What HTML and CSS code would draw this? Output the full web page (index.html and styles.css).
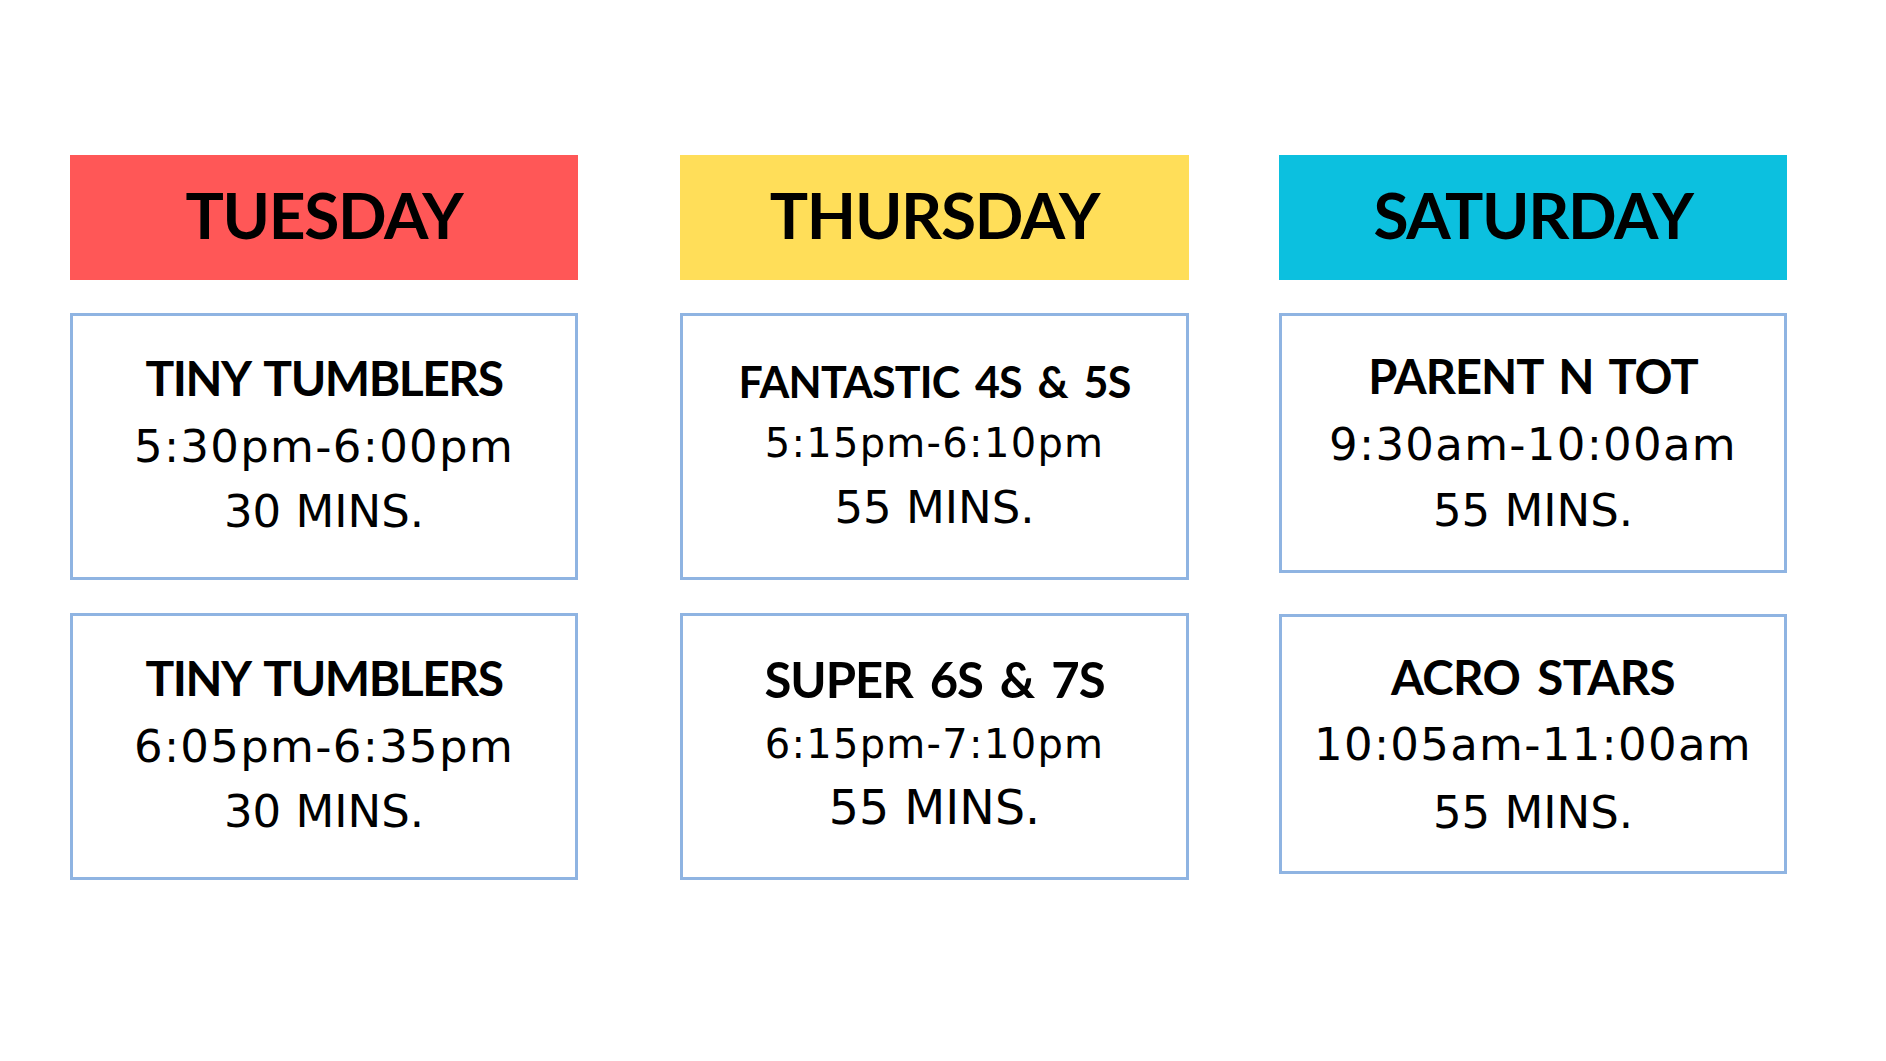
FILE: index.html
```html
<!DOCTYPE html>
<html lang="en">
<head>
<meta charset="utf-8">
<title>Class Schedule</title>
<link rel="stylesheet" href="styles.css">
</head>
<body>
<main class="schedule">
  <section class="col col-tue">
    <div class="day day-red">TUESDAY</div>
    <div class="box box-tue">
      <div class="title t-tiny">TINY TUMBLERS</div>
      <div class="time s-45">5:30pm-6:00pm</div>
      <div class="mins s-45">30 MINS.</div>
    </div>
    <div class="box box-tue">
      <div class="title t-tiny">TINY TUMBLERS</div>
      <div class="time s-45">6:05pm-6:35pm</div>
      <div class="mins s-45">30 MINS.</div>
    </div>
  </section>
  <section class="col col-thu">
    <div class="day day-yellow">THURSDAY</div>
    <div class="box box-thu1">
      <div class="title t-fantastic">FANTASTIC 4S &amp; 5S</div>
      <div class="time s-40">5:15pm-6:10pm</div>
      <div class="mins s-45">55 MINS.</div>
    </div>
    <div class="box box-thu2">
      <div class="title t-super">SUPER 6S &amp; 7S</div>
      <div class="time s-40">6:15pm-7:10pm</div>
      <div class="mins s-475">55 MINS.</div>
    </div>
  </section>
  <section class="col col-sat">
    <div class="day day-cyan">SATURDAY</div>
    <div class="box box-short box-sat1">
      <div class="title t-parent">PARENT N TOT</div>
      <div class="time s-45">9:30am-10:00am</div>
      <div class="mins s-45">55 MINS.</div>
    </div>
    <div class="box box-short box-lower box-sat2">
      <div class="title t-acro">ACRO STARS</div>
      <div class="time s-45">10:05am-11:00am</div>
      <div class="mins s-45">55 MINS.</div>
    </div>
  </section>
</main>
</body>
</html>
```

FILE: styles.css
```css
html, body {
  margin: 0;
  padding: 0;
  background: #ffffff;
}

body {
  width: 1886px;
  height: 1061px;
  overflow: hidden;
  color: #000000;
  font-family: "DejaVu Sans", "Liberation Sans", sans-serif;
}

.schedule {
  display: flex;
  align-items: flex-start;
  padding: 155px 0 0 70px;
}

.col {
  display: flex;
  flex-direction: column;
  gap: 33px;
  width: 508px;
}

.col-thu {
  width: 509px;
  margin-left: 102px;
}

.col-sat {
  margin-left: 90px;
}

.day {
  box-sizing: border-box;
  height: 125px;
  padding-top: 28px;
  text-align: center;
  font-family: "Lato", "Liberation Sans", sans-serif;
  font-weight: 700;
  font-size: 64px;
  line-height: 1;
  letter-spacing: -1.3px;
}

.day-red { background: #ff5757; }
.day-yellow { background: #ffde59; }
.day-cyan { background: #0cc0df; }

.box {
  --pt: 38px;
  --m1: 22px;
  --m2: 20px;
  box-sizing: border-box;
  height: 267px;
  border: 3px solid #8fb4e2;
  display: flex;
  flex-direction: column;
  align-items: center;
  text-align: center;
  padding-top: var(--pt);
}

.box-short {
  height: 260px;
}

.box-lower {
  margin-top: 8px;
}

.box-tue { --pt: 38px; --m1: 22px; --m2: 20px; }
.box-thu1 { --pt: 44px; --m1: 20px; --m2: 22px; }
.box-thu2 { --pt: 39px; --m1: 20px; --m2: 20px; }
.box-sat1 { --pt: 37px; --m1: 22px; --m2: 21px; }
.box-sat2 { --pt: 36px; --m1: 21px; --m2: 23px; }

.title {
  font-family: "Lato", "Liberation Sans", sans-serif;
  font-weight: 700;
  line-height: 1;
  white-space: nowrap;
  word-spacing: 6px;
}

.time, .mins {
  font-family: "DejaVu Sans", "Liberation Sans", sans-serif;
  font-weight: 400;
  line-height: 1;
  white-space: nowrap;
}

.time {
  margin-top: var(--m1);
  letter-spacing: 1.3px;
}

.mins {
  margin-top: var(--m2);
}

.t-tiny { font-size: 48px; letter-spacing: -1.5px; }
.t-fantastic { font-size: 43px; letter-spacing: -0.8px; }
.t-super { font-size: 49px; letter-spacing: -1px; }
.t-parent { font-size: 47px; letter-spacing: -1px; }
.t-acro { font-size: 47.5px; letter-spacing: -0.6px; }

.s-475 { font-size: 47.5px; }
.s-45 { font-size: 45px; }
.s-40 { font-size: 40px; }
```
